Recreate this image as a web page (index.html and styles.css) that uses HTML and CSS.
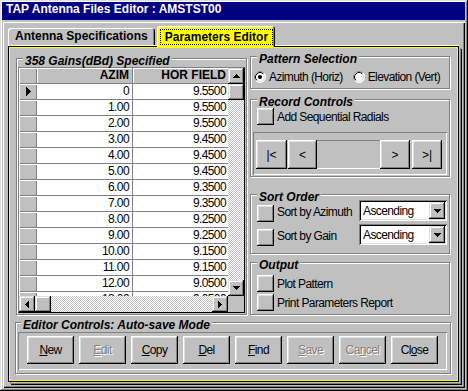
FILE: index.html
```html
<!DOCTYPE html>
<html lang="en">
<head>
    <meta charset="UTF-8">
    <title>TAP Antenna Files Editor</title>
    <link rel="stylesheet" href="styles.css">
</head>
<body>
    <div class="window">
        <div class="titlebar">TAP Antenna Files Editor : AMSTST00</div>
        <div class="frame">
            <div class="tabs">
                <div class="tab">Antenna Specifications</div>
                <div class="tab active"><span class="focus">Parameters Editor</span></div>
            </div>
            <div class="page">
                <div class="page-top">
                    <div class="group gains">
                        <div class="group-title">358 Gains(dBd) Specified</div>
                        <div class="grid">
                            <div class="grid-main">
                                <div class="rows">
                                    <div class="row head"><div class="ind"></div><div class="cell">AZIM</div><div class="cell">HOR FIELD</div></div>
                                    <div class="row"><div class="ind"><svg class="arrow" width="5" height="9" viewBox="0 0 5 9"><path d="M0 0h1v1h1v1h1v1h1v1h1v1h-1v1h-1v1h-1v1h-1v1h-1z"/></svg></div><div class="cell">0</div><div class="cell">9.5500</div></div>
                                    <div class="row"><div class="ind"></div><div class="cell">1.00</div><div class="cell">9.5500</div></div>
                                    <div class="row"><div class="ind"></div><div class="cell">2.00</div><div class="cell">9.5500</div></div>
                                    <div class="row"><div class="ind"></div><div class="cell">3.00</div><div class="cell">9.4500</div></div>
                                    <div class="row"><div class="ind"></div><div class="cell">4.00</div><div class="cell">9.4500</div></div>
                                    <div class="row"><div class="ind"></div><div class="cell">5.00</div><div class="cell">9.4500</div></div>
                                    <div class="row"><div class="ind"></div><div class="cell">6.00</div><div class="cell">9.3500</div></div>
                                    <div class="row"><div class="ind"></div><div class="cell">7.00</div><div class="cell">9.3500</div></div>
                                    <div class="row"><div class="ind"></div><div class="cell">8.00</div><div class="cell">9.2500</div></div>
                                    <div class="row"><div class="ind"></div><div class="cell">9.00</div><div class="cell">9.2500</div></div>
                                    <div class="row"><div class="ind"></div><div class="cell">10.00</div><div class="cell">9.1500</div></div>
                                    <div class="row"><div class="ind"></div><div class="cell">11.00</div><div class="cell">9.1500</div></div>
                                    <div class="row"><div class="ind"></div><div class="cell">12.00</div><div class="cell">9.0500</div></div>
                                    <div class="row"><div class="ind"></div><div class="cell">13.00</div><div class="cell">9.0500</div></div>
                                </div>
                                <div class="vscroll">
                                    <div class="sbtn"><svg class="arrow" width="7" height="4" viewBox="0 0 7 4"><path d="M3 0h1v1h1v1h1v1h1v1H0V3h1V2h1V1h1z"/></svg></div>
                                    <div class="sbtn"></div>
                                    <div class="track"></div>
                                    <div class="sbtn"><svg class="arrow" width="7" height="4" viewBox="0 0 7 4"><path d="M0 0h7v1h-1v1h-1v1h-1v1h-1v-1h-1v-1h-1v-1h-1z"/></svg></div>
                                </div>
                            </div>
                            <div class="grid-foot">
                                <div class="hscroll">
                                    <div class="sbtn"><svg class="arrow" width="4" height="7" viewBox="0 0 4 7"><path d="M3 0h1v7h-1v-1h-1v-1h-1v-1h-1v-1h1v-1h1v-1h1z"/></svg></div>
                                    <div class="sbtn"></div>
                                    <div class="track"></div>
                                    <div class="sbtn"><svg class="arrow" width="4" height="7" viewBox="0 0 4 7"><path d="M0 0h1v1h1v1h1v1h1v1h-1v1h-1v1h-1v1h-1z"/></svg></div>
                                </div>
                                <div class="corner"></div>
                            </div>
                        </div>
                    </div>

                    <div class="side">
                        <div class="group side-group pattern">
                            <div class="group-title">Pattern Selection</div>
                            <div class="radios">
                                <svg class="radio" width="12" height="12" viewBox="0 0 12 12">
                                    <circle cx="6" cy="6" r="5.5" fill="#fff" stroke="#fff"/>
                                    <path d="M2.11 9.89A5.5 5.5 0 0 1 9.89 2.11" fill="none" stroke="#808080"/>
                                    <circle cx="6" cy="6" r="4.5" fill="#fff" stroke="#dfdfdf"/>
                                    <path d="M2.82 9.18A4.5 4.5 0 0 1 9.18 2.82" fill="none" stroke="#000"/>
                                    <circle cx="6" cy="6" r="2" fill="#000"/>
                                </svg>
                                <span class="radio-label">Azimuth (Horiz)</span>
                                <svg class="radio second" width="12" height="12" viewBox="0 0 12 12">
                                    <circle cx="6" cy="6" r="5.5" fill="#fff" stroke="#fff"/>
                                    <path d="M2.11 9.89A5.5 5.5 0 0 1 9.89 2.11" fill="none" stroke="#808080"/>
                                    <circle cx="6" cy="6" r="4.5" fill="#fff" stroke="#dfdfdf"/>
                                    <path d="M2.82 9.18A4.5 4.5 0 0 1 9.18 2.82" fill="none" stroke="#000"/>
                                </svg>
                                <span class="radio-label">Elevation (Vert)</span>
                            </div>
                        </div>

                        <div class="group side-group record">
                            <div class="group-title">Record Controls</div>
                            <div class="check-row first"><div class="sq"></div><span class="check-label">Add Sequential Radials</span></div>
                            <div class="nav-panel">
                                <div class="btn nav-first">|&lt;</div>
                                <div class="btn nav-prev">&lt;</div>
                                <div class="nav-gap"></div>
                                <div class="btn nav-next">&gt;</div>
                                <div class="btn nav-last">&gt;|</div>
                            </div>
                        </div>

                        <div class="group side-group sort">
                            <div class="group-title">Sort Order</div>
                            <div class="sort-row first">
                                <div class="sq"></div><span class="check-label">Sort by Azimuth</span>
                                <div class="select">Ascending<div class="sbtn drop"><svg class="arrow" width="7" height="4" viewBox="0 0 7 4"><path d="M0 0h7v1h-1v1h-1v1h-1v1h-1v-1h-1v-1h-1v-1h-1z"/></svg></div></div>
                            </div>
                            <div class="sort-row">
                                <div class="sq"></div><span class="check-label">Sort by Gain</span>
                                <div class="select">Ascending<div class="sbtn drop"><svg class="arrow" width="7" height="4" viewBox="0 0 7 4"><path d="M0 0h7v1h-1v1h-1v1h-1v1h-1v-1h-1v-1h-1v-1h-1z"/></svg></div></div>
                            </div>
                        </div>

                        <div class="group side-group output">
                            <div class="group-title">Output</div>
                            <div class="check-row out-first"><div class="sq"></div><span class="check-label">Plot Pattern</span></div>
                            <div class="check-row out-second"><div class="sq"></div><span class="check-label">Print Parameters Report</span></div>
                        </div>
                    </div>
                </div>

                <div class="group editor">
                    <div class="group-title">Editor Controls: Auto-save Mode</div>
                    <div class="btn-panel">
                        <div class="btn"><u>N</u>ew</div>
                        <div class="btn disabled"><u>E</u>dit</div>
                        <div class="btn"><u>C</u>opy</div>
                        <div class="btn"><u>D</u>el</div>
                        <div class="btn"><u>F</u>ind</div>
                        <div class="btn disabled"><u>S</u>ave</div>
                        <div class="btn disabled">Ca<u>n</u>cel</div>
                        <div class="btn">Cl<u>o</u>se</div>
                    </div>
                </div>
            </div>
        </div>
    </div>
</body>
</html>
```

FILE: styles.css
```css
body {
    margin: 0;
    padding: 0;
    background: #c0c0c0;
    font-family: "Liberation Sans", Arial, sans-serif;
    font-size: 12px;
    letter-spacing: -0.6px;
    color: #000;
}

.window {
    width: 468px;
    height: 391px;
    box-sizing: border-box;
    padding: 2px;
    background: #c0c0c0;
    box-shadow: inset -1px -1px #000, inset 1px 1px #dfdfdf, inset -2px -2px #808080, inset 2px 2px #fff;
}

.titlebar {
    height: 18px;
    line-height: 18px;
    margin-right: 1px;
    padding-left: 4px;
    background: #000080;
    color: #fff;
    font: bold 12px "Liberation Sans", Arial, sans-serif;
    letter-spacing: 0;
}

.frame {
    height: 366px;
    margin: 2px 1px 0 1px;
    padding: 4px 0 0 5px;
    box-sizing: border-box;
    box-shadow: inset 1px 1px #fff, inset -1px -1px #000, inset -2px -2px #808080;
}

/* tabs */
.tabs {
    display: flex;
    align-items: flex-start;
    height: 20px;
    font: bold 12px "Liberation Sans", Arial, sans-serif;
    letter-spacing: 0;
}

.tab {
    height: 17px;
    margin-top: 2px;
    padding: 0 7px;
    line-height: 17px;
    border-radius: 3px 3px 0 0;
    box-shadow: inset 1px 1px #fff, inset -1px 0 #000, inset -2px 0 #808080;
}

.tab.active {
    position: relative;
    z-index: 1;
    height: 21px;
    margin-top: 0;
    margin-left: 2px;
    padding: 3px 2px 0 3px;
    box-sizing: border-box;
    background: #ff0;
}

.focus {
    display: block;
    padding: 0 4px;
    line-height: 14px;
    border: 1px dotted #000;
}

/* tab page */
.page {
    display: flex;
    flex-direction: column;
    width: 451px;
    height: 336px;
    box-sizing: border-box;
    padding: 11px 0 0 7px;
    border: 1px solid #000;
    box-shadow: inset 0 0 0 1px #ff0, 0 -1px #fff, 1px 1px #c0c0c0, 2px 2px #808080, 3px 3px #000;
}

.page-top {
    display: grid;
    grid-template-columns: 231px 200px;
    column-gap: 3px;
    align-items: start;
}

.group {
    box-sizing: border-box;
    border: 1px solid #808080;
    box-shadow: inset 1px 1px #fff, 1px 1px #fff;
}

.group-title {
    width: fit-content;
    margin: -5px 0 0 5px;
    padding: 0 2px;
    background: #c0c0c0;
    font: italic bold 12px/14px "Liberation Sans", Arial, sans-serif;
    letter-spacing: 0;
}

.side-group .group-title {
    margin-left: 6px;
}

/* grid */
.gains {
    height: 257px;
    padding: 0 1px 1px 1px;
}

.grid {
    margin-top: -1px;
    border: 1px solid #000;
    border-top-color: #808080;
    border-left-color: #808080;
}

.grid-main {
    display: flex;
    height: 228px;
}

.rows {
    width: 209px;
    overflow: hidden;
}

.row {
    display: grid;
    grid-template-columns: 18px 96px 95px;
    height: 16px;
}

.cell {
    box-sizing: border-box;
    padding-right: 3px;
    background: #fff;
    border-right: 1px solid #808080;
    border-bottom: 1px solid #808080;
    text-align: right;
    line-height: 15px;
    white-space: nowrap;
}

.cell:last-child {
    border-right: none;
    padding-right: 2px;
}

.row.head .cell {
    background: #c0c0c0;
    box-shadow: inset 1px 1px #fff;
    font: bold 12px/15px "Liberation Sans", Arial, sans-serif;
    letter-spacing: 0;
}

.ind {
    display: flex;
    align-items: center;
    justify-content: center;
    box-sizing: border-box;
    padding-bottom: 1px;
    box-shadow: inset 1px 1px #fff, inset -1px -1px #808080;
}

.arrow {
    display: block;
    fill: #000;
}

.sbtn {
    display: flex;
    align-items: center;
    justify-content: center;
    flex: none;
    width: 16px;
    height: 16px;
    background: #c0c0c0;
    box-shadow: inset -1px -1px #000, inset 1px 1px #dfdfdf, inset -2px -2px #808080, inset 2px 2px #fff;
}

.vscroll {
    display: flex;
    flex-direction: column;
    width: 16px;
}

.track {
    flex: 1;
    background: repeating-conic-gradient(#c0c0c0 0 25%, #fff 0 50%) 0 0 / 2px 2px;
}

.grid-foot {
    display: flex;
    height: 16px;
}

.hscroll {
    display: flex;
    width: 209px;
}

.corner {
    width: 16px;
    background: #c0c0c0;
}

/* right column */
.side {
    display: flex;
    flex-direction: column;
    margin-top: -2px;
}

.pattern {
    height: 33px;
}

.radios {
    display: flex;
    align-items: center;
    height: 14px;
    margin: 4px 0 0 3px;
    white-space: nowrap;
}

.radio {
    display: block;
    flex: none;
}

.radio.second {
    margin-left: 10px;
}

.radio-label {
    margin-left: 3px;
}

.record {
    height: 78px;
    margin-top: 10px;
}

.check-row {
    display: flex;
    align-items: center;
    height: 17px;
    padding-left: 6px;
}

.check-row.first {
    margin-top: -1px;
}

.sq {
    flex: none;
    width: 17px;
    height: 17px;
    box-sizing: border-box;
    background: #c0c0c0;
    box-shadow: inset -1px -1px #000, inset 1px 1px #fff, inset -2px -2px #808080, inset 2px 2px #dfdfdf;
}

.check-label {
    margin-left: 3px;
    white-space: nowrap;
}

.nav-panel {
    display: flex;
    height: 43px;
    margin: 7px 2px 0 2px;
    padding: 8px 0 0 3px;
    box-sizing: border-box;
    box-shadow: inset 1px 1px #808080, inset -1px -1px #fff;
}

.btn {
    display: flex;
    align-items: center;
    justify-content: center;
    box-sizing: border-box;
    background: #c0c0c0;
    box-shadow: inset -1px -1px #000, inset 1px 1px #fff, inset -2px -2px #808080, inset 2px 2px #dfdfdf;
    white-space: nowrap;
}

.nav-panel .btn {
    height: 29px;
    letter-spacing: 0;
}

.nav-first {
    width: 31px;
}

.nav-prev {
    width: 29px;
    margin-left: 1px;
}

.nav-gap {
    width: 63px;
    height: 29px;
    box-sizing: border-box;
    border-top: 1px solid #808080;
    border-bottom: 1px solid #fff;
}

.nav-next {
    width: 30px;
}

.nav-last {
    width: 30px;
    margin-left: 2px;
}

.sort {
    height: 60px;
    margin-top: 17px;
}

.sort-row {
    display: flex;
    align-items: flex-end;
    height: 21px;
    margin-top: 3px;
    padding-left: 6px;
}

.sort-row.first {
    margin-top: -4px;
}

.sort-row .sq {
    margin-bottom: -1px;
}

.sort-row .check-label {
    flex: 1;
    line-height: 17px;
}

.select {
    display: flex;
    flex: none;
    align-items: center;
    width: 88px;
    height: 21px;
    margin-right: 2px;
    padding-left: 4px;
    box-sizing: border-box;
    background: #fff;
    box-shadow: inset 1px 1px #808080, inset -1px -1px #fff, inset 2px 2px #000, inset -2px -2px #dfdfdf;
}

.sbtn.drop {
    height: 17px;
    margin-left: auto;
    margin-right: 2px;
}

.output {
    height: 53px;
    margin-top: 8px;
}

.check-row.out-first {
    margin-top: 3px;
}

.check-row.out-second {
    margin-top: 2px;
}

/* editor controls */
.editor {
    width: 436px;
    height: 52px;
    margin: 7px 0 0 -1px;
}

.btn-panel {
    display: flex;
    gap: 5px;
    height: 38px;
    margin: 0 3px 0 2px;
    padding: 4px 0 0 9px;
    box-sizing: border-box;
    box-shadow: inset 1px 1px #808080, inset -1px -1px #fff;
}

.btn-panel .btn {
    width: 47px;
    height: 28px;
    padding-bottom: 1px;
}

.btn.disabled {
    color: #808080;
    text-shadow: 1px 1px #fff;
}
```
